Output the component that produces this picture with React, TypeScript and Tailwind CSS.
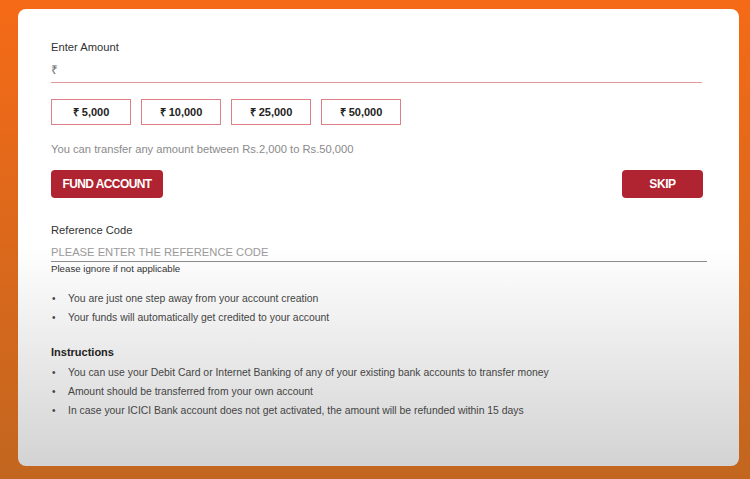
import { useState } from 'react';

const amounts = ['5,000', '10,000', '25,000', '50,000'];

const notes = [
    'You are just one step away from your account creation',
    'Your funds will automatically get credited to your account',
];

const instructions = [
    'You can use your Debit Card or Internet Banking of any of your existing bank accounts to transfer money',
    'Amount should be transferred from your own account',
    'In case your ICICI Bank account does not get activated, the amount will be refunded within 15 days',
];

function Bullets({ items }: { items: string[] }) {
    return (
        <ul className="flex flex-col gap-[5px]">
            {items.map((t) => (
                <li key={t} className="flex items-center text-[10.4px] leading-[14px] text-[#444]">
                    <span className="w-[17px] pl-[1px] text-[10px]">•</span>
                    <span>{t}</span>
                </li>
            ))}
        </ul>
    );
}

export default function App() {
    const [amount, setAmount] = useState('');
    const [refCode, setRefCode] = useState('');

    return (
        <div
            className="h-[479px] w-[750px] bg-gradient-to-b from-[#f56a16] to-[#c2661f] pl-[18px] pr-[11px] pt-[9px] pb-[13px]"
            style={{ fontFamily: '"Liberation Sans", Arial, sans-serif' }}
        >
            <div className="flex h-full flex-col rounded-[8px] bg-[linear-gradient(to_bottom,#ffffff_0%,#ffffff_52%,#d3d3d3_100%)] pl-[33px] pr-[35px] pt-[31px]">
                {/* Amount */}
                <label className="text-[11.2px] leading-[14px] text-[#333]">Enter Amount</label>
                <input
                    type="text"
                    value={amount}
                    onChange={(e) => setAmount(e.target.value)}
                    placeholder="₹"
                    className="mt-[4px] h-[25px] w-[651px] border-b border-[#e39a9c] bg-transparent text-[12px] text-[#333] placeholder:text-[#666] focus:outline-none"
                />

                <div className="mt-[16px] flex gap-[10px]">
                    {amounts.map((a) => (
                        <button
                            key={a}
                            onClick={() => setAmount(a)}
                            className="flex h-[26px] w-[80px] items-center justify-center border border-[#dc7f87] bg-white text-[11px] font-bold text-[#222]"
                        >
                            ₹ {a}
                        </button>
                    ))}
                </div>

                <p className="mt-[17px] text-[11.2px] leading-[14px] text-[#8a8a8a]">
                    You can transfer any amount between Rs.2,000 to Rs.50,000
                </p>

                <div className="mt-[14px] flex w-[652px] justify-between">
                    <button className="h-[28px] w-[112px] rounded-[4px] bg-[#b02330] text-[12px] font-bold tracking-[-0.6px] text-white">
                        FUND ACCOUNT
                    </button>
                    <button className="h-[28px] w-[81px] rounded-[4px] bg-[#b02330] text-[12px] font-bold tracking-[-0.4px] text-white">
                        SKIP
                    </button>
                </div>

                {/* Reference code */}
                <label className="mt-[25px] text-[11.2px] leading-[14px] text-[#333]">Reference Code</label>
                <input
                    type="text"
                    value={refCode}
                    onChange={(e) => setRefCode(e.target.value)}
                    placeholder="PLEASE ENTER THE REFERENCE CODE"
                    className="mt-[5px] h-[20px] w-[656px] border-b border-[#8c8c8c] bg-transparent text-[11.2px] text-[#333] placeholder:text-[#9a9a9a] focus:outline-none"
                />
                <p className="mt-[1px] text-[9.7px] leading-[12px] text-[#333]">Please ignore if not applicable</p>

                <div className="mt-[17px]">
                    <Bullets items={notes} />
                </div>

                <h3 className="mt-[20px] text-[11px] font-bold leading-[14px] text-[#222]">Instructions</h3>
                <div className="mt-[7px]">
                    <Bullets items={instructions} />
                </div>
            </div>
        </div>
    );
}
